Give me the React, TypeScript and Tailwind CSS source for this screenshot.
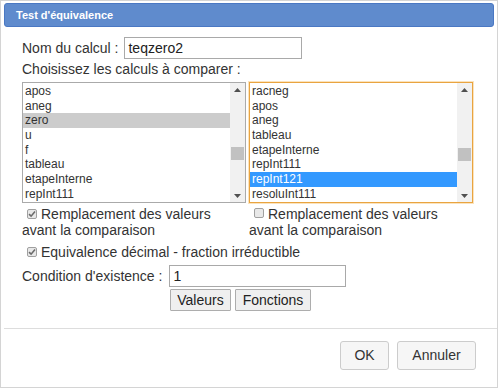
const leftItems = ["apos", "aneg", "zero", "u", "f", "tableau", "etapeInterne", "repInt111"];
const rightItems = ["racneg", "apos", "aneg", "tableau", "etapeInterne", "repInt111", "repInt121", "resoluInt111"];

const Check = ({ checked }: { checked: boolean }) => (
  <span className="inline-flex w-[10px] h-[10px] border border-[#a0a0a0] rounded-[2px] bg-[#e8e8e8] items-center justify-center mr-[4px] translate-y-[-1px]">
    {checked && (
      <svg width="8" height="8" viewBox="0 0 8 8">
        <path d="M1 4.2 L3.1 6.2 L7 1.6" fill="none" stroke="#6b6b6b" strokeWidth="1.6" />
      </svg>
    )}
  </span>
);

const ListBox = ({
  items,
  selected,
  active,
  thumbTop,
}: {
  items: string[];
  selected: number;
  active: boolean;
  thumbTop: number;
}) => (
  <div
    className={
      active
        ? "flex w-[224px] h-[121px] border border-[#e9a440] shadow-[0_0_0_1px_#fbe3bd]"
        : "flex w-[224px] h-[121px] border border-[#aaaaaa]"
    }
  >
    <div className="flex-1 pt-[1px] overflow-hidden">
      {items.map((it, i) => (
        <div
          key={it + i}
          className={
            i === selected
              ? active
                ? "h-[14.7px] leading-[14.7px] pl-[2px] bg-[#3399ff] text-white"
                : "h-[14.7px] leading-[14.7px] pl-[2px] bg-[#cccccc] text-[#333]"
              : "h-[14.7px] leading-[14.7px] pl-[2px] text-[#333]"
          }
        >
          {it}
        </div>
      ))}
    </div>
    <div className="w-[15px] bg-[#f1f1f1] flex flex-col items-center">
      <div className="h-[13px] flex items-center justify-center">
        <svg width="7" height="4" viewBox="0 0 7 4">
          <path d="M0 4 L3.5 0 L7 4 Z" fill="#505050" />
        </svg>
      </div>
      <div className="w-[13px] h-[13px] bg-[#c1c1c1]" style={{ marginTop: thumbTop }} />
      <div className="flex-1" />
      <div className="h-[13px] flex items-center justify-center">
        <svg width="7" height="4" viewBox="0 0 7 4">
          <path d="M0 0 L3.5 4 L7 0 Z" fill="#505050" />
        </svg>
      </div>
    </div>
  </div>
);

export default function App() {
  return (
    <div className="w-[500px] h-[389px] bg-white font-['Liberation_Sans',Arial,sans-serif] text-[#333]">
      <div className="w-[498px] h-[388px] border border-[#d4d4d4] pt-[2px] px-[3px] flex flex-col">
        <div className="h-[24px] bg-[#5f8bcd] border border-[#4a78c3] rounded-[3px] text-white font-bold text-[11px] pl-[11px] flex items-center">
          Test d'équivalence
        </div>

        <div className="pl-[18px] pt-[10px] text-[14px] leading-[16px]">
          <div className="flex items-center h-[22px]">
            <span>Nom du calcul :</span>
            <div className="ml-[6px] w-[178px] h-[22px] border border-[#a9a9a9] px-[3px] flex items-center text-[#222]">
              teqzero2
            </div>
          </div>
          <div className="mt-[2px]">Choisissez les calculs à comparer :</div>
          <div className="flex gap-[3px] mt-[5px] text-[12px]">
            <ListBox items={leftItems} selected={2} active={false} thumbTop={51} />
            <ListBox items={rightItems} selected={6} active={true} thumbTop={52} />
          </div>

          <div className="flex mt-[3px]">
            <div className="w-[227px] pl-[5px]">
              <div>
                <Check checked={true} />
                Remplacement des valeurs
              </div>
              <div className="-ml-[5px]">avant la comparaison</div>
            </div>
            <div className="pl-[5px]">
              <div>
                <Check checked={false} />
                Remplacement des valeurs
              </div>
              <div className="-ml-[5px]">avant la comparaison</div>
            </div>
          </div>

          <div className="mt-[6px] pl-[5px]">
            <Check checked={true} />
            Equivalence décimal - fraction irréductible
          </div>

          <div className="flex items-center h-[22px] mt-[5px]">
            <span>Condition d'existence :</span>
            <div className="ml-[7px] w-[177px] h-[22px] border border-[#a9a9a9] px-[3px] flex items-center text-[#222]">
              1
            </div>
          </div>

          <div className="flex gap-[4px] ml-[148px] mt-[2px]">
            <div className="w-[61px] h-[22px] border border-[#adadad] bg-[#efefef] flex items-center justify-center text-[#222] rounded-[1px]">
              Valeurs
            </div>
            <div className="w-[76px] h-[22px] border border-[#adadad] bg-[#efefef] flex items-center justify-center text-[#222] rounded-[1px]">
              Fonctions
            </div>
          </div>
        </div>

        <div className="mt-[17px] h-px bg-[#dddddd] -mr-[3px]" />

        <div className="flex justify-end gap-[8px] mt-[12px] pr-[18px] text-[14px]">
          <div className="w-[49px] h-[29px] border border-[#cccccc] bg-[#f6f6f6] rounded-[3px] flex items-center justify-center">
            OK
          </div>
          <div className="w-[79px] h-[29px] border border-[#cccccc] bg-[#f6f6f6] rounded-[3px] flex items-center justify-center">
            Annuler
          </div>
        </div>
      </div>
    </div>
  );
}
